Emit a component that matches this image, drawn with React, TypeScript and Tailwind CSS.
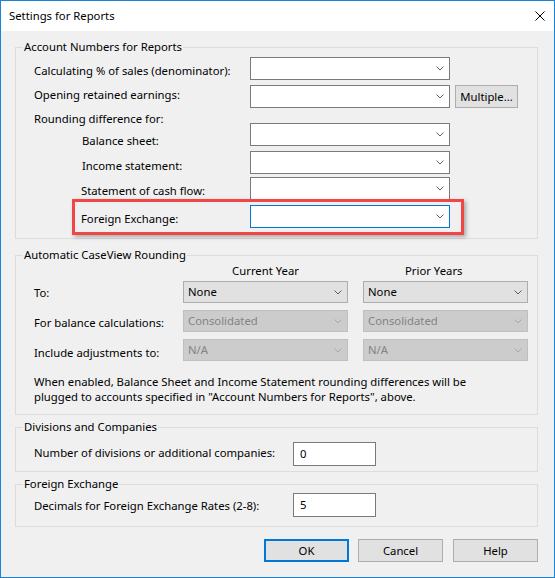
import React from "react";

type ComboKind = "plain" | "focused" | "raised" | "disabled";

const comboStyles: Record<ComboKind, string> = {
  plain: "border-[#7a7a7a] bg-white",
  focused: "border-[#0078d7] bg-white",
  raised: "border-[#adadad] bg-[#e1e1e1] text-black",
  disabled: "border-[#bfbfbf] bg-[#cccccc] text-[#838383]",
};

function Chevron({ color }: { color: string }) {
  return (
    <svg width="8" height="5" viewBox="0 0 8 5" className="mr-[5px] shrink-0">
      <polyline points="0.5,0.5 4,4 7.5,0.5" fill="none" stroke={color} strokeWidth="1" />
    </svg>
  );
}

function Combo({ kind = "plain", value, wide = true }: { kind?: ComboKind; value?: string; wide?: boolean }) {
  return (
    <div
      className={`flex shrink-0 items-center justify-between border pl-[4px] ${wide ? "h-[23px] w-[200px]" : "h-[22px] w-[165px]"} ${comboStyles[kind]}`}
    >
      <span className="leading-[16px]">{value}</span>
      <Chevron color={kind === "disabled" ? "#a8a8a8" : "#5f5f5f"} />
    </div>
  );
}

function Group({ title, className = "", children }: { title: string; className?: string; children: React.ReactNode }) {
  return (
    <fieldset className={`border border-[#dcdcdc] ${className}`}>
      <legend className="ml-[7px] px-[1px] leading-[16px]">{title}</legend>
      {children}
    </fieldset>
  );
}

function Button({ label, primary }: { label: string; primary?: boolean }) {
  return (
    <button
      className={`flex h-[23px] w-[85px] items-center justify-center bg-[#e1e1e1] leading-[16px] ${
        primary ? "border-2 border-[#0078d7]" : "border border-[#adadad]"
      }`}
    >
      {label}
    </button>
  );
}

export default function App() {
  return (
    <div className="h-[578px] w-[555px] overflow-hidden border border-[#1883d7] bg-[#f0f0f0] font-['Noto_Sans',sans-serif] text-[11.3px] text-black">
      <div className="flex h-[30px] items-center justify-between bg-white pl-[8px] pr-[9px]">
        <span className="text-[11.3px] leading-[16px]">Settings for Reports</span>
        <svg width="10" height="10" viewBox="0 0 10 10">
          <path d="M0.5 0.5 L9.5 9.5 M9.5 0.5 L0.5 9.5" stroke="#000" strokeWidth="1" />
        </svg>
      </div>

      <div className="flex flex-col pl-[14px] pr-[16px] pt-[8px]">
        <Group title="Account Numbers for Reports" className="pb-[10px] pt-[2px]">
          <div className="flex h-[23px] items-center">
            <span className="w-[234px] whitespace-nowrap pl-[18px] pt-[4px] leading-[16px]">Calculating % of sales (denominator):</span>
            <Combo />
          </div>
          <div className="mt-[5px] flex h-[23px] items-center">
            <span className="w-[234px] whitespace-nowrap pb-[4px] pl-[18px] leading-[16px]">Opening retained earnings:</span>
            <Combo />
            <button className="ml-[5px] flex h-[23px] w-[63px] items-center justify-center border border-[#adadad] bg-[#e1e1e1] leading-[16px]">
              Multiple...
            </button>
          </div>
          <div className="h-[15px] pl-[18px] pt-[3px] leading-[15px]">Rounding difference for:</div>
          <div className="flex h-[23px] items-center">
            <span className="w-[234px] whitespace-nowrap pl-[66px] pt-[12px] leading-[16px]">Balance sheet:</span>
            <Combo />
          </div>
          <div className="mt-[5px] flex h-[23px] items-center">
            <span className="w-[234px] whitespace-nowrap pl-[66px] pt-[6px] leading-[16px]">Income statement:</span>
            <Combo />
          </div>
          <div className="mt-[3px] flex h-[23px] items-center">
            <span className="w-[234px] whitespace-nowrap pl-[65px] pt-[5px] leading-[16px]">Statement of cash flow:</span>
            <Combo />
          </div>
          <div className="relative mt-[5px] flex h-[23px] items-center">
            <span className="w-[234px] whitespace-nowrap pl-[65px] pt-[4px] leading-[16px]">Foreign Exchange:</span>
            <Combo kind="focused" />
            <div className="absolute left-[56px] top-[-6px] h-[36px] w-[392px] border-[3px] border-[#f04646] shadow-[2px_2px_4px_rgba(0,0,0,0.3)]" />
          </div>
        </Group>

        <Group title="Automatic CaseView Rounding" className="mt-[8px] pb-[10px]">
          <div className="flex h-[15px] items-center leading-[15px]">
            <span className="w-[167px]" />
            <span className="w-[165px] text-center">Current Year</span>
            <span className="ml-[15px] w-[165px] pl-[42px]">Prior Years</span>
          </div>
          <div className="mt-[3px] flex h-[22px] items-center">
            <span className="w-[167px] pl-[18px] pt-[2px] leading-[16px]">To:</span>
            <Combo kind="raised" value="None" wide={false} />
            <div className="ml-[15px]">
              <Combo kind="raised" value="None" wide={false} />
            </div>
          </div>
          <div className="mt-[7px] flex h-[22px] items-center">
            <span className="w-[167px] whitespace-nowrap pl-[18px] pt-[4px] leading-[16px]">For balance calculations:</span>
            <Combo kind="disabled" value="Consolidated" wide={false} />
            <div className="ml-[15px]">
              <Combo kind="disabled" value="Consolidated" wide={false} />
            </div>
          </div>
          <div className="mt-[7px] flex h-[22px] items-center">
            <span className="w-[167px] whitespace-nowrap pl-[18px] pt-[6px] leading-[16px]">Include adjustments to:</span>
            <Combo kind="disabled" value="N/A" wide={false} />
            <div className="ml-[15px]">
              <Combo kind="disabled" value="N/A" wide={false} />
            </div>
          </div>
          <p className="mt-[13px] whitespace-nowrap pl-[18px] leading-[15px]">
            When enabled, Balance Sheet and Income Statement rounding differences will be
            <br />
            plugged to accounts specified in "Account Numbers for Reports", above.
          </p>
        </Group>

        <Group title="Divisions and Companies" className="mt-[4px] pb-[5px] pt-[7px]">
          <div className="flex h-[24px] items-center">
            <span className="w-[277px] whitespace-nowrap pb-[2px] pl-[18px] leading-[16px]">Number of divisions or additional companies:</span>
            <div className="flex h-[24px] w-[83px] items-center border border-[#7a7a7a] bg-white pl-[6px] leading-[16px]">0</div>
          </div>
        </Group>

        <Group title="Foreign Exchange" className="mt-[4px] pb-[9px] pt-[1px]">
          <div className="flex h-[24px] items-center">
            <span className="w-[277px] whitespace-nowrap pl-[18px] pt-[2px] leading-[16px]">Decimals for Foreign Exchange Rates (2-8):</span>
            <div className="flex h-[24px] w-[83px] items-center border border-[#7a7a7a] bg-white pl-[6px] leading-[16px]">5</div>
          </div>
        </Group>

        <div className="mt-[12px] flex justify-end">
          <Button label="OK" primary />
          <div className="ml-[9px]">
            <Button label="Cancel" />
          </div>
          <div className="ml-[10px]">
            <Button label="Help" />
          </div>
        </div>
      </div>
    </div>
  );
}
